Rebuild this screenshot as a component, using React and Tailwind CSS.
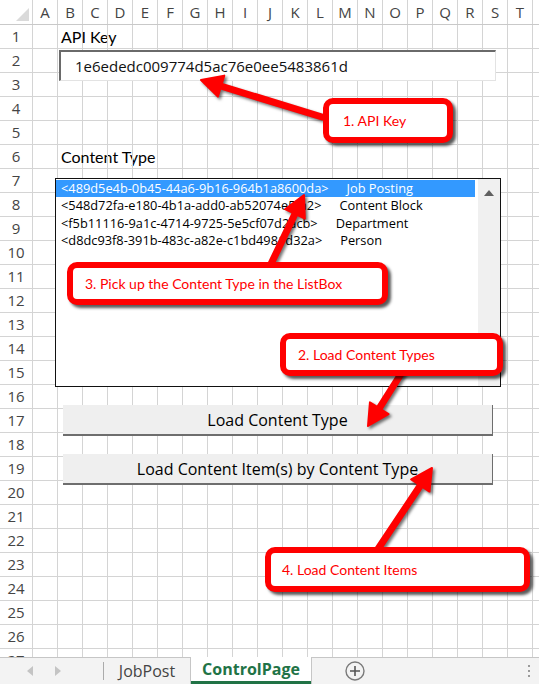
import React from 'react';

const COLS = 'ABCDEFGHIJKLMNOPQRST'.split('');
const ROWS = Array.from({ length: 27 }, (_, i) => i + 1);

const cellText = {
  '1-B': 'API Key',
  '6-B': 'Content Type',
};

const listItems = [
  { id: '<489d5e4b-0b45-44a6-9b16-964b1a8600da>', name: 'Job Posting' },
  { id: '<548d72fa-e180-4b1a-add0-ab52074e5fa2>', name: 'Content Block' },
  { id: '<f5b11116-9a1c-4714-9725-5e5cf07d2acb>', name: 'Department' },
  { id: '<d8dc93f8-391b-483c-a82e-c1bd4981d32a>', name: 'Person' },
];

// red annotation arrow, tail -> tip
const Arrow = ({ from, to }) => {
  const [x1, y1] = from;
  const [x2, y2] = to;
  const len = Math.hypot(x2 - x1, y2 - y1);
  const ux = (x2 - x1) / len;
  const uy = (y2 - y1) / len;
  const hl = 21;
  const hw = 11;
  const bx = x2 - ux * hl;
  const by = y2 - uy * hl;
  const nx = -uy;
  const ny = ux;
  const pts = `${x2},${y2} ${bx + nx * hw},${by + ny * hw} ${bx - nx * hw},${by - ny * hw}`;
  return (
    <g>
      <line x1={x1} y1={y1} x2={bx + ux * 3} y2={by + uy * 3} stroke="#ff0000" strokeWidth="7" strokeLinecap="round" />
      <polygon points={pts} fill="#ff0000" stroke="#ff0000" strokeWidth="2" strokeLinejoin="round" />
    </g>
  );
};

const Callout = ({ className, children }) => (
  <div
    className={`absolute flex items-center bg-white border-[6px] border-[#ff0000] rounded-[10px] shadow-[3px_3px_3px_rgba(0,0,0,0.65)] text-[14px] text-[#ff0000] font-['Lato',sans-serif] whitespace-nowrap ${className}`}
  >
    {children}
  </div>
);

export default function App() {
  return (
    <div className="relative w-[539px] h-[684px] overflow-hidden bg-white flex flex-col font-['Open_Sans',sans-serif]">
      {/* Column headers */}
      <div className="flex h-[25px] shrink-0 border-b border-[#c9c9c9]">
        <div className="w-[33px] shrink-0 border-r border-[#d4d4d4] relative">
          <svg className="absolute left-[16px] top-[8px]" width="14" height="14" viewBox="0 0 14 14">
            <polygon points="13,0 13,13 0,13" fill="#dadada" />
          </svg>
        </div>
        {COLS.map((c) => (
          <div key={c} className="w-[25px] shrink-0 border-r border-[#d4d4d4] flex items-center justify-center text-[15px] text-[#444]">
            {c}
          </div>
        ))}
        <div className="flex-1" />
      </div>

      {/* Sheet body */}
      <div className="flex-1 overflow-hidden">
        {ROWS.map((r) => (
          <div key={r} className="flex h-[24px]">
            <div className="w-[33px] shrink-0 border-r border-b border-[#d4d4d4] flex items-center justify-center text-[15px] text-[#444]">
              {r}
            </div>
            {COLS.map((c) => (
              <div key={c} className="w-[25px] shrink-0 border-r border-b border-[#d4d4d4] flex items-center">
                {cellText[`${r}-${c}`] && (
                  <span className="pl-[3px] whitespace-nowrap text-[16px] text-black font-['Lato',sans-serif]">
                    {cellText[`${r}-${c}`]}
                  </span>
                )}
              </div>
            ))}
            <div className="flex-1 border-b border-[#d4d4d4]" />
          </div>
        ))}
      </div>

      {/* Sheet tabs */}
      <div className="flex h-[27px] shrink-0 items-stretch bg-[#f3f3f3] border-t border-[#c6c6c6]">
        <div className="w-[103px] shrink-0 flex items-center">
          <svg className="ml-[27px]" width="7" height="10" viewBox="0 0 7 10">
            <polygon points="6,0 6,10 0,5" fill="#c4c4c4" />
          </svg>
          <svg className="ml-[21px]" width="7" height="10" viewBox="0 0 7 10">
            <polygon points="0,0 0,10 6,5" fill="#c4c4c4" />
          </svg>
        </div>
        <div className="w-[87px] shrink-0 border-l border-[#ababab] my-[4px] flex items-center justify-center text-[16px] text-[#444]">
          JobPost
        </div>
        <div className="w-[122px] shrink-0 -mt-px bg-white border-x border-[#c6c6c6] flex flex-col">
          <div className="flex-1 flex items-center justify-center text-[16px] font-bold text-[#217346]">ControlPage</div>
          <div className="h-[3px] bg-[#217346]" />
        </div>
        <div className="flex-1 flex items-center">
          <svg className="ml-[33px]" width="20" height="20" viewBox="0 0 20 20">
            <circle cx="10" cy="10" r="9" fill="none" stroke="#7a7a7a" strokeWidth="1.4" />
            <path d="M10 5v10M5 10h10" stroke="#555" strokeWidth="1.6" />
          </svg>
          <div className="ml-auto mr-[9px] flex flex-col gap-[3px]">
            <span className="w-[2px] h-[2px] bg-[#9a9a9a]" />
            <span className="w-[2px] h-[2px] bg-[#9a9a9a]" />
            <span className="w-[2px] h-[2px] bg-[#9a9a9a]" />
          </div>
        </div>
      </div>

      {/* API key textbox */}
      <div className="absolute left-[59px] top-[50px] w-[437px] h-[31px] bg-white border-t-2 border-l-2 border-r border-b border-t-[#6a6a6a] border-l-[#6a6a6a] border-r-[#e3e3e3] border-b-[#e3e3e3] flex items-center pl-[14px] text-[15px] text-[#111]">
        1e6ededc009774d5ac76e0ee5483861d
      </div>

      {/* Content type list box */}
      <div className="absolute left-[55px] top-[178px] w-[446px] h-[209px] bg-white border border-[#111] flex">
        <div className="flex-1 pt-px text-[12.8px] leading-[17.3px]">
          {listItems.map((it, i) => (
            <div
              key={it.id}
              className={`pl-[5px] whitespace-nowrap ${i === 0 ? 'bg-[#3399ff] text-white' : 'text-black'}`}
            >
              {it.id}
              <span className="ml-[18px]">{it.name}</span>
            </div>
          ))}
        </div>
        <div className="w-[25px] bg-[#f0f0f0] border-l-[3px] border-white flex flex-col justify-between items-center py-[11px]">
          <svg width="10" height="6" viewBox="0 0 10 6">
            <polygon points="0,6 10,6 5,0" fill="#606060" />
          </svg>
          <svg width="10" height="6" viewBox="0 0 10 6">
            <polygon points="0,0 10,0 5,6" fill="#606060" />
          </svg>
        </div>
      </div>

      {/* Buttons */}
      <button className="absolute left-[63px] top-[405px] w-[430px] h-[31px] bg-[#efefef] border-r border-b-2 border-[#6e6e6e] text-[16px] text-black">
        Load Content Type
      </button>
      <button className="absolute left-[63px] top-[454px] w-[430px] h-[31px] bg-[#efefef] border-r border-b-2 border-[#6e6e6e] text-[16px] text-black">
        Load Content Item(s) by Content Type
      </button>

      {/* Annotation arrows */}
      <svg className="absolute left-0 top-0 pointer-events-none drop-shadow-[2px_2px_1.5px_rgba(0,0,0,0.55)]" width="539" height="684">
        <Arrow from={[322, 117]} to={[201, 80]} />
        <Arrow from={[270, 266]} to={[304, 195]} />
        <Arrow from={[406, 366]} to={[368, 426]} />
        <Arrow from={[376, 552]} to={[432, 468]} />
      </svg>

      {/* Callouts */}
      <Callout className="left-[323px] top-[98px] w-[130px] h-[45px] pl-[14px]">1. API Key</Callout>
      <Callout className="left-[67px] top-[262px] w-[321px] h-[43px] pl-[12px]">3. Pick up the Content Type in the ListBox</Callout>
      <Callout className="left-[280px] top-[333px] w-[223px] h-[43px] pl-[12px]">2. Load Content Types</Callout>
      <Callout className="left-[265px] top-[547px] w-[265px] h-[45px] pl-[11px]">4. Load Content Items</Callout>
    </div>
  );
}
